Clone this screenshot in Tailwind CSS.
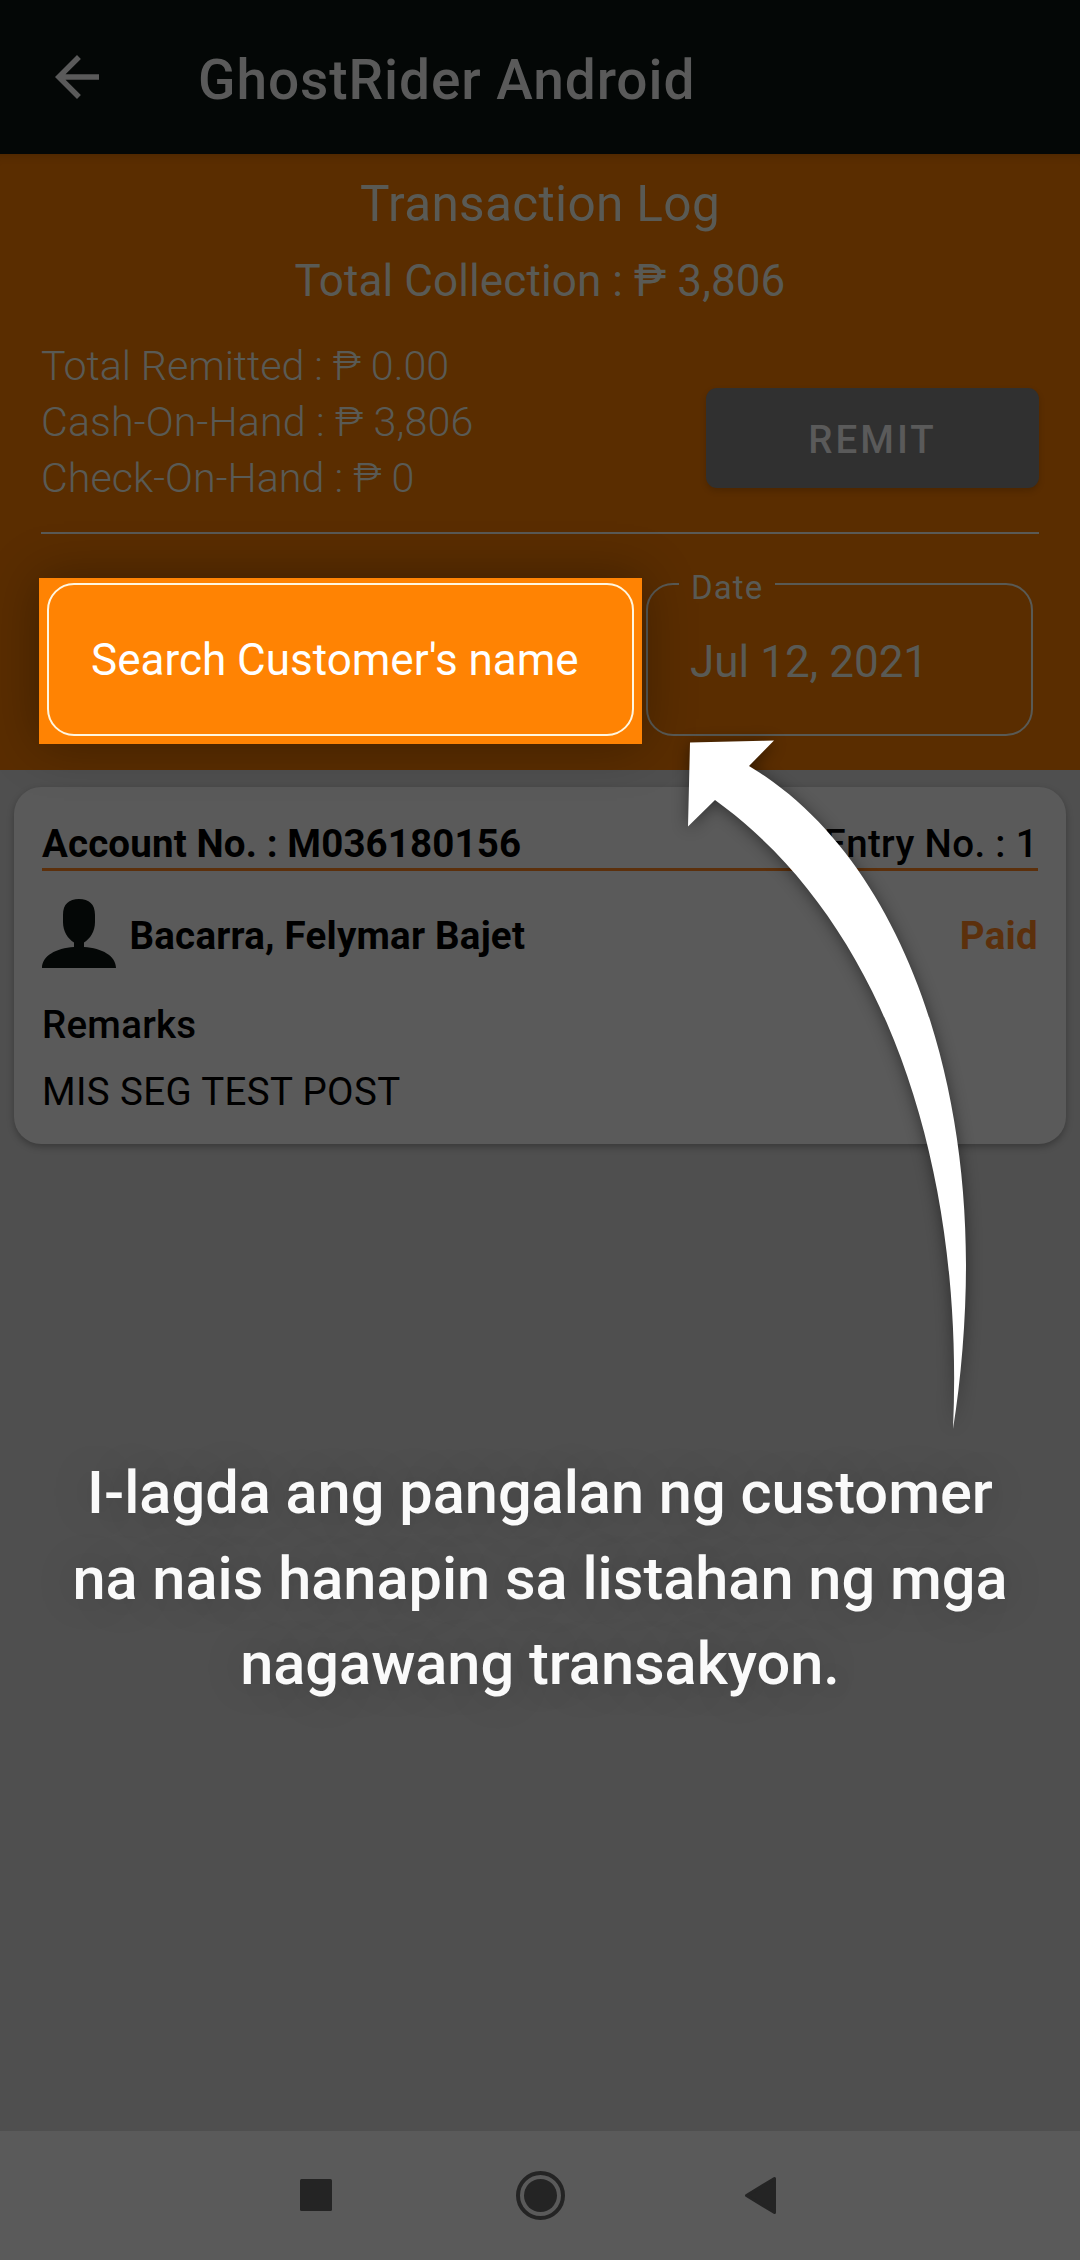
<!DOCTYPE html>
<html lang="fil">
<head>
<meta charset="utf-8">
<title>GhostRider Android</title>
<script src="https://cdn.jsdelivr.net/npm/@tailwindcss/browser@4"></script>
</head>
<body class="font-[Roboto,sans-serif]">
<div class="relative flex h-[2260px] w-[1080px] flex-col overflow-hidden bg-[#4f4f4f] whitespace-nowrap">

  <!-- App bar -->
  <header class="flex h-[154px] items-start bg-[#040706] pt-11 pl-11 text-[#5a5a5a]">
    <svg class="h-[66px] w-[66px]" viewBox="0 0 24 24" fill="currentColor"><path d="M20 11H7.83l5.59-5.59L12 4l-8 8 8 8 1.41-1.41L7.83 13H20v-2z"/></svg>
    <h1 class="mt-[3px] ml-[88px] text-[55px] leading-[66px] font-medium tracking-[0.93px]">GhostRider Android</h1>
  </header>

  <!-- Collection summary -->
  <section class="flex h-[616px] flex-col bg-[#5a2d00] px-[41px] pt-[21px] text-[#595a55] shadow-[inset_0_10px_8px_-8px_rgba(0,0,0,0.15)]">
    <h2 class="text-center text-[49.5px] leading-[58px] tracking-[0.35px]">Transaction Log</h2>
    <p class="mt-[22px] text-center text-[44px] leading-[52px] tracking-[0.1px]">Total Collection : ₱ 3,806</p>
    <div class="mt-[31px] flex justify-between">
      <div class="text-[41.25px] leading-[56px] font-light">
        <p class="tracking-[-0.1px]">Total Remitted : ₱ 0.00</p>
        <p class="tracking-[0.1px]">Cash-On-Hand : ₱ 3,806</p>
        <p>Check-On-Hand : ₱ 0</p>
      </div>
      <button class="mt-[50px] h-[100px] w-[333px] rounded-[11px] bg-[#303030] pt-[4px] text-[38.5px] font-medium tracking-[3px] text-[#5a5a5a] shadow-[0_3px_6px_rgba(0,0,0,0.16)]">REMIT</button>
    </div>
    <div class="mt-[26px] h-[2px] shrink-0 bg-[#5a5a56]"></div>
    <div class="mt-11 flex">
      <div class="relative -ml-[2px] h-[166px] w-[603px] shrink-0 bg-[#ff8303] pt-[5px] pl-2 shadow-[0_0_50px_rgba(0,0,0,0.32)]">
        <div class="flex h-[153px] w-[587px] items-center rounded-[27px] border-2 border-[#fff6e0] pl-[42px] text-[44px] leading-[52px] text-white">Search Customer's name</div>
      </div>
      <fieldset class="mt-[-7px] ml-1 h-[165px] w-[387px] shrink-0 rounded-[27px] border-2 border-[#595a55] pl-[42px]">
        <legend class="-ml-[11px] h-[26px] px-3 text-[33px] leading-[34px] tracking-[1.1px]">Date</legend>
        <p class="mt-[39px] text-[44px] leading-[52px]">Jul 12, 2021</p>
      </fieldset>
    </div>
  </section>

  <!-- Transaction card -->
  <article class="mx-[14px] mt-[17px] h-[357px] rounded-[27px] bg-[#5a5a5a] px-7 pt-[34px] text-[38.5px] leading-[46px] text-black shadow-[0_3px_7px_rgba(0,0,0,0.28)]">
    <div class="flex justify-between border-b-3 border-[#5c300c] pb-[1px]">
      <p class="font-bold tracking-[0.13px]">Account No. : M036180156</p>
      <p class="font-medium tracking-[0.35px]">Entry No. : 1</p>
    </div>
    <div class="mt-7 flex h-[69px] items-center">
      <svg class="h-[69px] w-[74px]" viewBox="0 0 74 69" fill="#040706"><path d="M37 0C47 0 53 5 53 16V23C53 33 48 39.5 42 43.5V48C60 49 74 57 74 69H0C0 57 14 49 32 48V43.5C26 39.5 21 33 21 23V16C21 5 27 0 37 0Z"/></svg>
      <p class="mt-1 ml-[13.5px] font-bold tracking-[0.22px]">Bacarra, Felymar Bajet</p>
      <p class="mt-1 ml-auto font-bold tracking-[0.3px] text-[#5c300c]">Paid</p>
    </div>
    <p class="mt-[34px] font-medium tracking-[0.25px]">Remarks</p>
    <p class="mt-[21px] tracking-[0.36px]">MIS SEG TEST POST</p>
  </article>

  <!-- Coach mark instruction -->
  <p class="mt-[307px] text-center text-[59.5px] leading-[85.6px] font-medium text-[#fafafa] [text-shadow:0_0_40px_rgba(0,0,0,0.22)]">I-lagda ang pangalan ng customer<br>na nais hanapin sa listahan ng mga<br>nagawang transakyon.</p>

  <!-- System navigation -->
  <nav class="mt-auto h-[129px] bg-[#5a5a5a]">
    <svg class="h-[129px] w-[1080px]" viewBox="0 0 1080 129" fill="#242424">
      <rect x="300" y="48" width="32" height="32" rx="1.5"/>
      <circle cx="540.5" cy="64.5" r="16.5"/>
      <circle cx="540.5" cy="64.5" r="22.5" fill="none" stroke="#242424" stroke-width="4"/>
      <path d="M746.5 64.5L774.5 47.5V81.500Z" stroke="#242424" stroke-width="3" stroke-linejoin="round"/>
    </svg>
  </nav>

  <!-- Coach mark arrow, laid over the page -->
  <svg class="absolute top-0 left-0 h-[1500px] w-[1080px] drop-shadow-[0_2px_8px_rgba(0,0,0,0.45)]" viewBox="0 0 1080 1500" fill="#fff">
    <path d="M690 742.500L774 740.500L749 766C890 850 966 1050 966 1265C966 1320 961 1380 953 1429C965 1160 882 920 715 800L688 826.500Z"/>
  </svg>
</div>
</body>
</html>
